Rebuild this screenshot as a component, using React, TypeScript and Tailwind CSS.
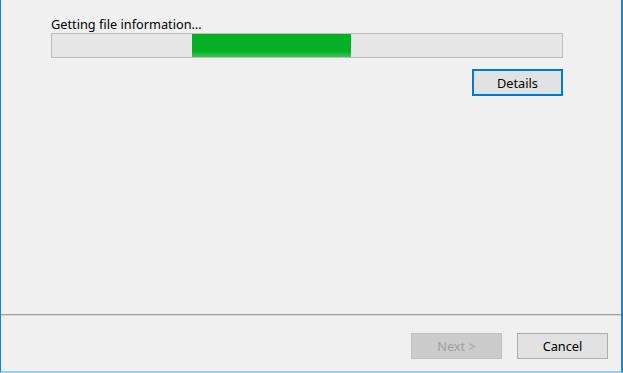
const App = () => {
  return (
    <div className="w-[623px] h-[373px] bg-[#f0f0f0] border-l border-l-[#1883d7] border-r-2 border-r-[#1883d7] border-b-2 border-b-[#9ccbf0] flex flex-col font-['Segoe_UI','Noto_Sans',sans-serif] text-[12.75px] text-black overflow-hidden">
      {/* body */}
      <div className="h-[314px] pl-[50px] pt-[15px] flex flex-col">
        <div className="leading-[18px] h-[18px]">Getting file information…</div>
        <div className="w-[512px] h-[25px] border border-[#bcbcbc] bg-[#e6e6e6] flex">
          <div className="w-[140px]" />
          <div className="w-[159px] h-full bg-[linear-gradient(to_bottom,#06b025_75%,#39c256)]" />
        </div>
        <div className="w-[512px] flex justify-end mt-[11px]">
          <button className="w-[91px] h-[27px] pt-[2px] border-2 border-[#0078d7] bg-[#e1e1e1] leading-none">
            Details
          </button>
        </div>
      </div>

      {/* separator */}
      <div className="h-px bg-[#a0a0a0]" />
      <div className="h-px bg-[#d6d6d6]" />

      {/* footer */}
      <div className="flex-1 flex justify-end items-start gap-[15px] pt-[17px] pr-[13px]">
        <button disabled className="w-[91px] h-[26px] pt-px border border-[#bfbfbf] bg-[#cccccc] text-[#a0a0a0] leading-none">
          Next &gt;
        </button>
        <button className="w-[91px] h-[26px] pt-px border border-[#adadad] bg-[#e1e1e1] leading-none">
          Cancel
        </button>
      </div>
    </div>
  );
};

export default App;
